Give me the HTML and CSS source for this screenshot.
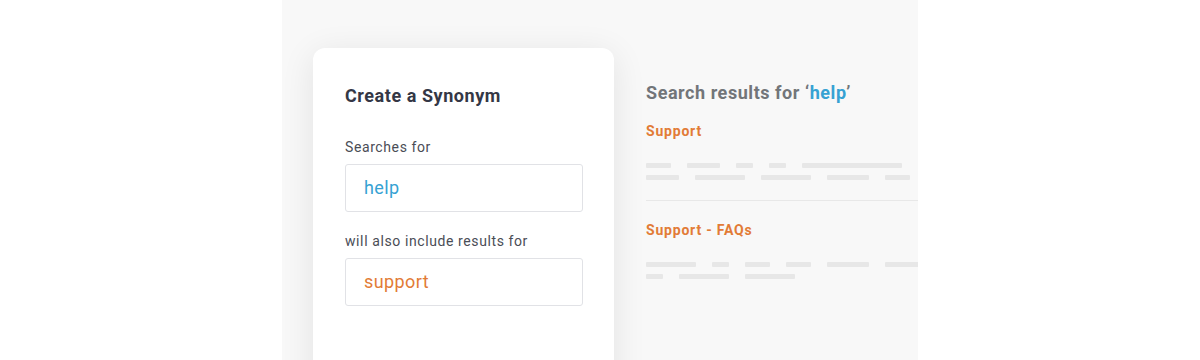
FILE: index.html
```html
<!DOCTYPE html>
<html>
<head>
<meta charset="utf-8">
<link rel="stylesheet" href="styles.css">
</head>
<body>
<div class="panel">
  <div class="card">
    <h2 class="card-title">Create a Synonym</h2>
    <div class="label first">Searches for</div>
    <div class="field blue">help</div>
    <div class="label">will also include results for</div>
    <div class="field orange">support</div>
  </div>
  <div class="results">
    <h3 class="results-title">Search results for ‘<span class="blue">help</span>’</h3>
    <div class="result">
      <div class="result-title">Support</div>
      <div class="lines">
        <div class="row"><span class="bar w25"></span><span class="bar w33"></span><span class="bar w17"></span><span class="bar w17"></span><span class="bar w100"></span></div>
        <div class="row"><span class="bar w33"></span><span class="bar w50"></span><span class="bar w50"></span><span class="bar w42"></span><span class="bar w25"></span></div>
      </div>
    </div>
    <div class="divider"></div>
    <div class="result">
      <div class="result-title">Support - FAQs</div>
      <div class="lines">
        <div class="row"><span class="bar w50"></span><span class="bar w17"></span><span class="bar w25"></span><span class="bar w25"></span><span class="bar w42"></span><span class="bar w50"></span></div>
        <div class="row"><span class="bar w17"></span><span class="bar w50"></span><span class="bar w50"></span></div>
      </div>
    </div>
  </div>
</div>
</body>
</html>
```

FILE: styles.css
```css
html, body {
  margin: 0;
  padding: 0;
  background: #ffffff;
}
body {
  font-family: Roboto, "Liberation Sans", sans-serif;
  width: 1200px;
  height: 360px;
  overflow: hidden;
}
.panel {
  margin-left: 282px;
  width: 636px;
  height: 360px;
  background: #f8f8f8;
  overflow: hidden;
  display: flex;
  align-items: flex-start;
  box-sizing: border-box;
  padding: 48px 0 0 31px;
}
.card {
  flex: none;
  width: 301px;
  height: 360px;
  box-sizing: border-box;
  background: #ffffff;
  border-radius: 12px;
  box-shadow: 0 6px 34px rgba(0, 0, 0, 0.09);
  padding: 36px 31px 0 32px;
}
.card-title {
  margin: 0;
  font-size: 18px;
  line-height: 24px;
  font-weight: 700;
  letter-spacing: 0.55px;
  color: #343745;
}
.label {
  font-size: 14px;
  line-height: 20px;
  letter-spacing: 0.6px;
  color: #4a4d56;
  margin-top: 19px;
}
.label.first {
  margin-top: 29px;
}
.field {
  margin-top: 7px;
  height: 48px;
  box-sizing: border-box;
  border: 1px solid #e1e2e6;
  border-radius: 3px;
  padding: 0 18px;
  font-size: 18px;
  line-height: 46px;
  letter-spacing: 0.4px;
}
.blue { color: #36a2d3; }
.orange { color: #e27b36; }
.results {
  flex: 1;
  margin-left: 32px;
  margin-top: 33px;
  min-width: 0;
}
.results-title {
  margin: 0;
  font-size: 18px;
  line-height: 24px;
  font-weight: 700;
  letter-spacing: 0.55px;
  color: #727579;
  white-space: nowrap;
}
.result-title {
  font-size: 14px;
  line-height: 20px;
  font-weight: 700;
  letter-spacing: 0.8px;
  color: #e27b36;
  white-space: nowrap;
}
.results-title + .result .result-title {
  margin-top: 16px;
}
.lines {
  margin-top: 22px;
  display: flex;
  flex-direction: column;
  gap: 7px;
}
.row {
  display: flex;
  gap: 16px;
  height: 5px;
}
.bar {
  flex: none;
  height: 5px;
  border-radius: 1px;
  background: #e7e7e7;
}
.w17 { width: 17px; }
.w25 { width: 25px; }
.w33 { width: 33px; }
.w42 { width: 42px; }
.w50 { width: 50px; }
.w100 { width: 100px; }
.divider {
  margin-top: 20px;
  height: 1px;
  background: #e8e8e8;
}
.divider + .result .result-title {
  margin-top: 19px;
}
```
